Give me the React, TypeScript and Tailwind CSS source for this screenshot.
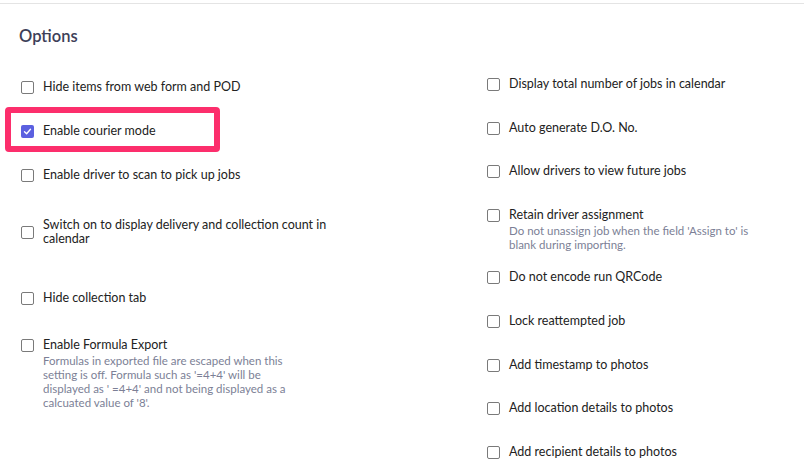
const font = { fontFamily: "Lato, 'Noto Sans', sans-serif" };

interface Option { label: string; desc?: string; checked?: boolean; cls: string }

const LEFT: Option[] = [
    { label: "Hide items from web form and POD", cls: "mt-[76px]" },
    { label: "Enable courier mode", checked: true, cls: "mt-[30px]" },
    { label: "Enable driver to scan to pick up jobs", cls: "mt-[30px]" },
    { label: "Switch on to display delivery and collection count in calendar", cls: "mt-[36px]" },
    { label: "Hide collection tab", cls: "mt-[45px]" },
    {
        label: "Enable Formula Export",
        desc: "Formulas in exported file are escaped when this setting is off. Formula such as '=4+4' will be displayed as ' =4+4' and not being displayed as a calcuated value of '8'.",
        cls: "mt-[33px]",
    },
];

const RIGHT: Option[] = [
    { label: "Display total number of jobs in calendar", cls: "mt-[73px]" },
    { label: "Auto generate D.O. No.", cls: "mt-[30px]" },
    { label: "Allow drivers to view future jobs", cls: "mt-[29px]" },
    { label: "Retain driver assignment", desc: "Do not unassign job when the field 'Assign to' is blank during importing.", cls: "mt-[30px]" },
    { label: "Do not encode run QRCode", cls: "mt-[18px]" },
    { label: "Lock reattempted job", cls: "mt-[30px]" },
    { label: "Add timestamp to photos", cls: "mt-[30px]" },
    { label: "Add location details to photos", cls: "mt-[29px]" },
    { label: "Add recipient details to photos", cls: "mt-[30px]" },
];

function Box({ checked }: { checked?: boolean }) {
    if (checked) {
        return (
            <div className="w-[13px] h-[13px] rounded-[2px] bg-[#5b60e0] flex items-center justify-center shrink-0">
                <svg width="9" height="9" viewBox="0 0 12 12" fill="none">
                    <path d="M2 6.3 L4.8 9 L10 3" stroke="white" strokeWidth="1.8" strokeLinecap="round" strokeLinejoin="round" />
                </svg>
            </div>
        );
    }
    return <div className="w-[13px] h-[13px] rounded-[2px] border-[1.5px] border-[#7a7a7a] bg-white shrink-0" />;
}

function Item({ o }: { o: Option }) {
    const twoLine = o.label.length > 45;
    return (
        <div className={o.cls}>
            <div className={`flex gap-[9px] ${twoLine ? "items-center" : "items-start"}`}>
                <div className={twoLine ? "shrink-0" : "pt-[1px] shrink-0"}><Box checked={o.checked} /></div>
                <div>
                    <div className="text-[12.5px] leading-[14px] text-[#222] max-w-[300px]">{o.label}</div>
                    {o.desc && <div className="mt-[2px] text-[11.5px] leading-[14px] text-[#7c7f96] max-w-[262px]">{o.desc}</div>}
                </div>
            </div>
        </div>
    );
}

export default function App() {
    return (
        <div className="relative w-[804px] h-[471px] bg-white overflow-hidden" style={font}>
            <div className="h-[3px]" />
            <div className="border-t border-[#e4e4e4]" />
            <h2 className="absolute left-[19px] top-[25px] text-[16.5px] leading-[22px] font-semibold text-[#3d4058]">Options</h2>

            <div className="grid grid-cols-[466px_1fr] pl-[21px]">
                <div className="flex flex-col">
                    {LEFT.map(o => <Item key={o.label} o={o} />)}
                </div>
                <div className="flex flex-col">
                    {RIGHT.map(o => <Item key={o.label} o={o} />)}
                </div>
            </div>

            {/* highlight annotation */}
            <div className="absolute left-[5px] top-[107px] w-[215px] h-[45px] border-[6px] border-[#fc2e6c] rounded-[4px] pointer-events-none" />
        </div>
    );
}
